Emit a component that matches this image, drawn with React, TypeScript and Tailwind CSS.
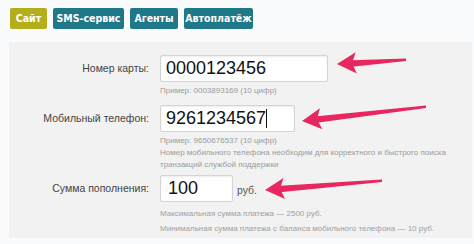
import React from 'react';

const tabs = [
  { label: 'Сайт', active: true, w: 'w-[37px]' },
  { label: 'SMS-сервис', active: false, w: 'w-[71px]' },
  { label: 'Агенты', active: false, w: 'w-[48px]' },
  { label: 'Автоплатёж', active: false, w: 'w-[69px]' },
];

// pink arrow pointing left, drawn over the form
const Arrow = ({ x1, y1, x2, y2 }: { x1: number; y1: number; x2: number; y2: number }) => {
  const ang = Math.atan2(y1 - y2, x1 - x2);
  const len = 22;
  const spread = 0.5;
  const p1 = [x2 + len * Math.cos(ang - spread), y2 + len * Math.sin(ang - spread)];
  const p2 = [x2 + len * Math.cos(ang + spread), y2 + len * Math.sin(ang + spread)];
  const mid = [x2 + 15 * Math.cos(ang), y2 + 15 * Math.sin(ang)];
  return (
    <g>
      <path d={`M${mid[0]} ${mid[1] - 3} L${x1} ${y1 - 1.5} L${x1} ${y1 + 1} L${mid[0]} ${mid[1] + 3.5} Z`} fill="#e8265f" />
      <path d={`M${x2} ${y2} L${p1[0]} ${p1[1]} L${mid[0]} ${mid[1]} L${p2[0]} ${p2[1]} Z`} fill="#e8265f" />
    </g>
  );
};

const inputCls =
  'ml-[11px] h-[27px] bg-white border border-[#d4d4d4] rounded-[2px] shadow-[inset_0_1px_2px_rgba(0,0,0,0.08)] flex items-center text-[18px] text-[#111]';

const App: React.FC = () => {
  return (
    <div className="relative w-[474px] h-[244px] bg-[#fafbfc] overflow-hidden" style={{ fontFamily: '"Liberation Sans", Arial, sans-serif' }}>
      {/* tabs */}
      <div className="flex gap-[6px] pl-[10px] pt-[8px]">
        {tabs.map((t) => (
          <div
            key={t.label}
            className={`${t.w} h-[21px] rounded-[2px] flex items-center justify-center text-[10.5px] font-bold text-white ${t.active ? 'bg-[#b2ae1c]' : 'bg-[#1f7888]'}`}
            style={{ fontFamily: '"DejaVu Sans Condensed", "DejaVu Sans", sans-serif' }}
          >
            {t.label}
          </div>
        ))}
      </div>

      {/* form panel */}
      <div className="ml-[9px] mt-[13px] w-[463px] h-[196px] bg-[#f2f2f2] pt-[13px] whitespace-nowrap">
        <div className="flex items-center">
          <div className="w-[140px] text-right text-[10.5px] text-[#444]">Номер карты:</div>
          <div className={`${inputCls} w-[168px] pl-[5px]`}>0000123456</div>
        </div>
        <div className="ml-[151px] mt-[3px] text-[8px] text-[#9a9a9a]">Пример: 0003893169 (10 цифр)</div>

        <div className="flex items-center mt-[8px]">
          <div className="w-[140px] text-right text-[10.5px] text-[#444]">Мобильный телефон:</div>
          <div className={`${inputCls} w-[135px] pl-[5px]`}>
            9261234567<span className="inline-block w-[1px] h-[19px] bg-[#111]" />
          </div>
        </div>
        <div className="ml-[151px] mt-[3px] text-[8px] leading-[12px] text-[#9a9a9a]">
          <div>Пример: 9650676537 (10 цифр)</div>
          <div>Номер мобильного телефона необходим для корректного и быстрого поиска</div>
          <div>транзакций службой поддержки</div>
        </div>

        <div className="flex items-center mt-[4px]">
          <div className="w-[140px] text-right text-[10.5px] text-[#444]">Сумма пополнения:</div>
          <div className={`${inputCls} w-[73px] pl-[7px]`}>100</div>
          <div className="ml-[4px] mt-[4px] text-[10.5px] text-[#555]">руб.</div>
        </div>
        <div className="ml-[151px] mt-[6px] text-[8px] text-[#a0a0a0]">Максимальная сумма платежа — 2500 руб.</div>
        <div className="ml-[151px] mt-[3px] text-[8px] text-[#a0a0a0]">Минимальная сумма платежа с баланса мобильного телефона — 10 руб.</div>
      </div>

      {/* annotation arrows */}
      <svg className="absolute left-0 top-0 pointer-events-none" width="474" height="244">
        <Arrow x1={406} y1={60} x2={337} y2={64} />
        <Arrow x1={426} y1={107} x2={302} y2={121} />
        <Arrow x1={382} y1={181} x2={265} y2={190} />
      </svg>
    </div>
  );
};

export default App;
